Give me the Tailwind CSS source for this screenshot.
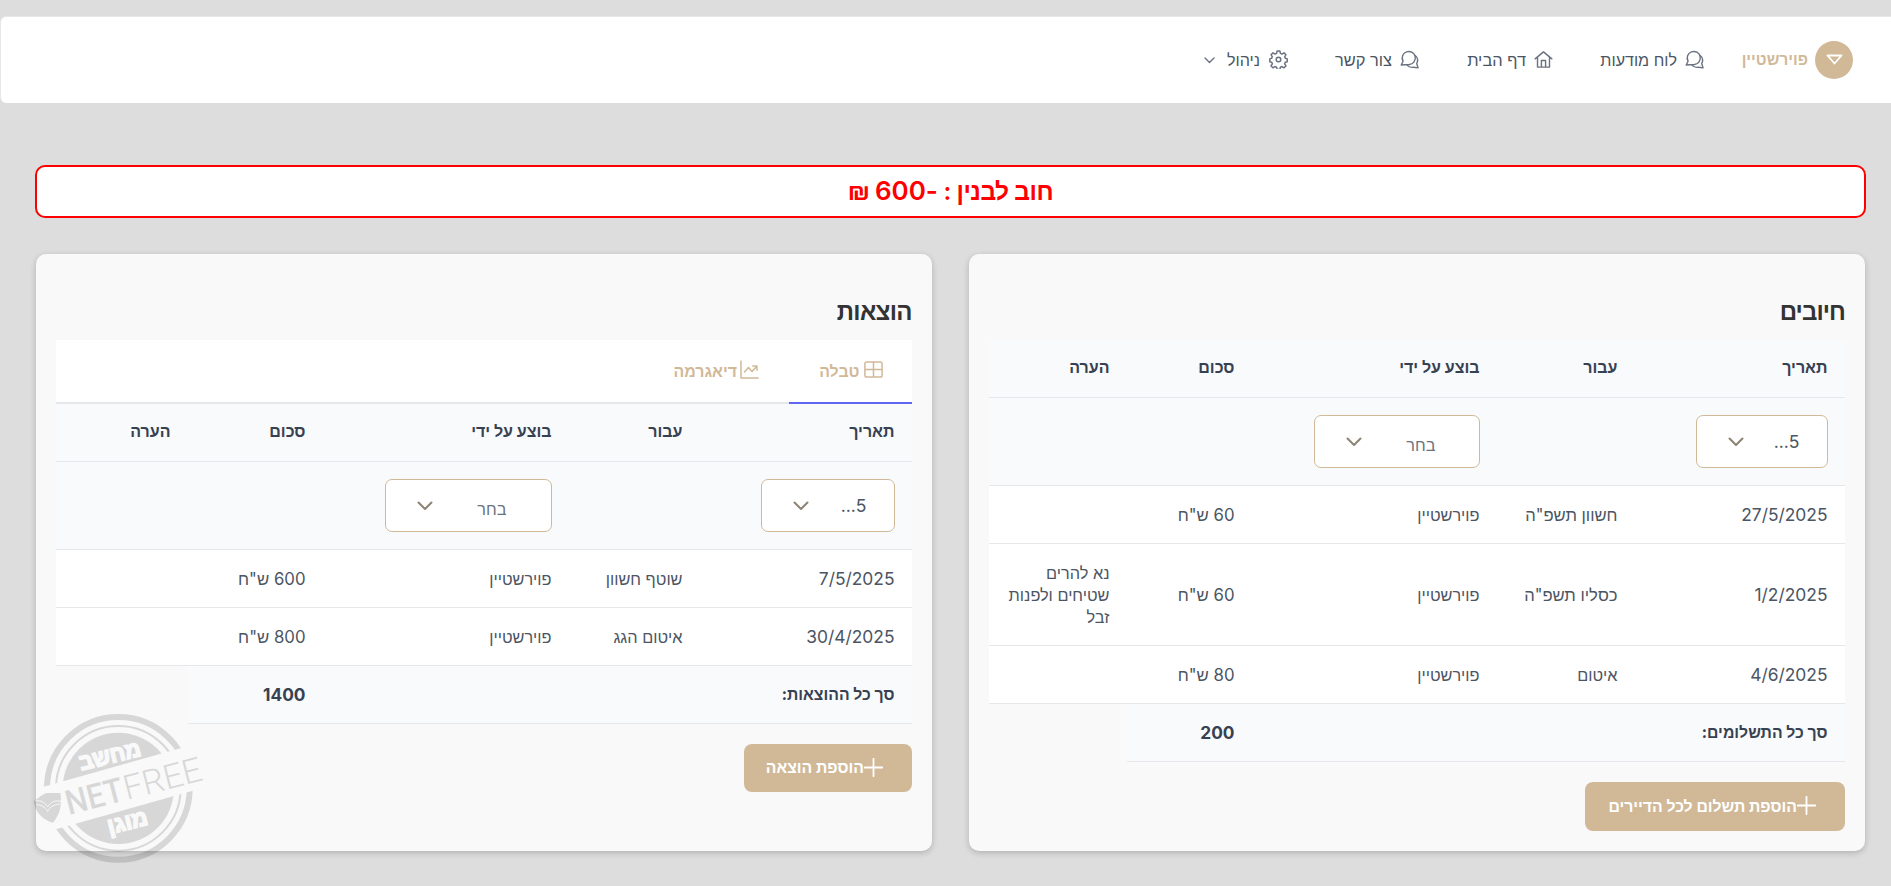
<!DOCTYPE html>
<html lang="he" dir="rtl">
<head>
<meta charset="utf-8">
<title>פוירשטיין</title>
<script src="https://cdn.jsdelivr.net/npm/@tailwindcss/browser@4"></script>
</head>
<body class="h-[886px] overflow-hidden bg-[#dddddd] font-[Inter,'Noto_Sans',sans-serif] text-[16.3px] leading-[22px] text-[#4b5563]">
<svg class="hidden">
  <symbol id="chat" viewBox="0 0 20 20" fill="none" stroke="currentColor" stroke-width="1.5" stroke-linejoin="round"><path d="M3.200 11.800A6.900 6.900 0 1 1 9.800 15.300L1.300 15.800z"/><path d="M15.800 5.500a7 7 0 0 1 1.800 8.700l1.400 4.600-4.800-.7a7 7 0 0 1-7-2.500"/></symbol>
  <symbol id="home" viewBox="0 0 20 20" fill="none" stroke="currentColor" stroke-width="1.5" stroke-linejoin="round" stroke-linecap="round"><path d="M1.200 9.300L10 2l8.800 7.300M3.700 7.500V18h12.600V7.500M7.800 18v-7h4.400v7"/></symbol>
  <symbol id="gear" viewBox="0 0 24 24" fill="none" stroke="currentColor" stroke-width="1.900" stroke-linejoin="round"><circle cx="12" cy="12" r="2.900"/><path d="M10.300 1.300h3.400l.7 3 2 .8 2.600-1.600 2.400 2.400-1.600 2.700.8 1.900 2.400.7v3.600l-2.400.6-.8 2 1.600 2.700-2.400 2.400-2.600-1.600-2 .8-.7 3h-3.400l-.7-3-2-.8L5 22.500l-2.400-2.400 1.600-2.700-.8-2-2.400-.6v-3.600l2.400-.7.8-1.900-1.600-2.700L5 3.500l2.600 1.600 2-.8z"/></symbol>
  <symbol id="chev" viewBox="0 0 16 10" fill="none" stroke="currentColor" stroke-width="2" stroke-linecap="round" stroke-linejoin="round"><path d="M1.500 1.500L8 8l6.500-6.500"/></symbol>
  <symbol id="plus" viewBox="0 0 18 18" fill="none" stroke="currentColor" stroke-width="1.700" stroke-linecap="round"><path d="M9 .8v16.400M.8 9h16.400"/></symbol>
</svg>

<header class="mt-4 flex h-[87px] items-center rounded-l-[6px] border-t border-l border-[#e5e7eb] bg-white pr-[38px]">
  <div class="flex w-[111px] items-center gap-[7px] text-[15.700px] whitespace-nowrap font-semibold text-[#d1b998]">
    <span class="flex size-[38px] shrink-0 items-center justify-center rounded-full bg-[#d1b998]"><svg class="mb-[2px] h-[11px] w-[17px]" viewBox="0 0 17 11" fill="none" stroke="#fff" stroke-width="1.800" stroke-linejoin="round"><path d="M1.500 1.500h14L8.500 9.500z"/></svg></span>
    <span>פוירשטיין</span>
  </div>
  <nav class="mr-[38px] flex items-center text-[16.100px] whitespace-nowrap">
    <a class="flex w-[151px] items-center gap-[8px]"><svg class="mb-0.5 size-[19px] text-[#6b7280]"><use href="#chat"/></svg><span>לוח מודעות</span></a>
    <a class="flex w-[134px] items-center gap-[8px] text-[16.400px]"><svg class="mb-0.5 size-[19px] text-[#6b7280]"><use href="#home"/></svg><span>דף הבית</span></a>
    <a class="flex w-[131px] items-center gap-[8px] text-[16.400px]"><svg class="mb-0.5 size-[19px] text-[#6b7280]"><use href="#chat"/></svg><span>צור קשר</span></a>
    <a class="flex items-center gap-[9px]"><svg class="mb-0.5 size-[19px] text-[#6b7280]"><use href="#gear"/></svg><span>ניהול</span><svg class="mr-[3px] h-[7px] w-[11px] text-[#6b7280]"><use href="#chev"/></svg></a>
  </nav>
</header>

<main class="mt-[62px] mr-[25px] ml-[35px]">
  <div class="flex h-[53px] items-center justify-center rounded-[10px] border-2 border-[#ff0000] bg-white pb-[2px] text-[24.5px] leading-[30px] font-semibold text-[#ff0000]"><span class="-tracking-[0.500px]">חוב לבנין : <span class="text-[26px] tracking-normal">-600</span> ₪</span></div>

  <div class="mt-[36px] mr-px flex gap-[37px]">
    <section class="h-[597px] w-[896px] shrink-0 rounded-[10px] bg-[#f9f9f9] px-5 pt-[43px] shadow-[0_2px_6px_rgba(0,0,0,0.2)]">
      <h2 class="h-[43px] text-[24px] leading-[30px] font-semibold -tracking-[0.9px] text-[#333333]">חיובים</h2>
      <table class="w-[856px] table-fixed border-separate border-spacing-0 [&_td]:border-b [&_td]:border-[#e5e7eb] [&_td]:px-[17.5px] [&_th]:border-b [&_th]:border-[#e5e7eb] [&_th]:px-[17.5px] [&_th]:text-right [&_th]:text-[16px]">
        <colgroup><col class="w-[210px]"><col class="w-[138px]"><col class="w-[245px]"><col class="w-[125px]"><col class="w-[138px]"></colgroup>
        <thead class="bg-[#f9fafc] text-[#374151]">
          <tr class="h-[58px] [&>th]:pb-[3px]"><th>תאריך</th><th>עבור</th><th>בוצע על ידי</th><th>סכום</th><th>הערה</th></tr>
          <tr class="h-[88px]">
            <th><div class="flex h-[53px] w-[132px] items-center justify-between rounded-[7px] border border-[#d1b998] bg-white pr-[27px] pl-[31px] text-[17.5px] font-normal text-[#4b5563]"><span>5...</span><svg class="h-[10px] w-[16px] text-[#8d8374]"><use href="#chev"/></svg></div></th>
            <th></th>
            <th><div class="flex h-[53px] w-[166px] items-center justify-between rounded-[7px] border border-[#d1b998] bg-white pr-[43px] pl-[31px] text-[16.3px] font-normal text-[#6b7280]"><span class="pt-1.5">בחר</span><svg class="h-[10px] w-[16px] text-[#8d8374]"><use href="#chev"/></svg></div></th>
            <th></th><th></th>
          </tr>
        </thead>
        <tbody class="bg-white">
          <tr class="h-[58px]"><td class="text-[17.4px]">27/5/2025</td><td class="text-[16.600px] whitespace-nowrap">חשוון תשפ"ה</td><td>פוירשטיין</td><td class="text-[16.8px]">60 ש"ח</td><td></td></tr>
          <tr class="h-[102px]"><td class="text-[17.4px]">1/2/2025</td><td class="text-[16.600px] whitespace-nowrap">כסליו תשפ"ה</td><td>פוירשטיין</td><td class="text-[16.8px]">60 ש"ח</td><td>נא להרים שטיחים ולפנות זבל</td></tr>
          <tr class="h-[58px]"><td class="text-[17.4px]">4/6/2025</td><td>איטום</td><td>פוירשטיין</td><td class="text-[16.8px]">80 ש"ח</td><td></td></tr>
          <tr class="h-[58px] text-[15.8px] font-bold text-[#374151]"><td colspan="3" class="bg-[#f9fafc]">סך כל התשלומים:</td><td class="bg-[#f9fafc] text-[17.3px]">200</td><th class="border-b-0! bg-[#f9f9f9]"></th></tr>
        </tbody>
      </table>
      <button class="mt-5 flex h-[49px] w-[260px] items-center rounded-[8px] bg-[#d1b998] pr-[29px] text-[15.8px] font-bold whitespace-nowrap text-white"><svg class="mb-0.5 size-[19px] shrink-0"><use href="#plus"/></svg><span>הוספת תשלום לכל הדיירים</span></button>
    </section>

    <section class="h-[597px] w-[896px] shrink-0 rounded-[10px] bg-[#f9f9f9] px-5 pt-[43px] shadow-[0_2px_6px_rgba(0,0,0,0.2)]">
      <h2 class="h-[43px] text-[24px] leading-[30px] font-semibold -tracking-[0.6px] text-[#333333]">הוצאות</h2>
      <div class="flex h-[64px] border-b-2 border-[#e5e7eb] bg-white text-[15.900px] font-bold text-[#d1b998]">
        <div class="flex h-[64px] w-[123px] items-center gap-1 border-b-2 border-[#6366f1] pr-[29.5px]"><svg class="mb-1 h-[17px] w-[19px]" viewBox="0 0 19 17" fill="none" stroke="currentColor" stroke-width="1.500"><rect x=".9" y=".9" width="17.200" height="15.200" rx="1.800"/><path d="M9.500 1v15M1 8.500h17"/></svg><span class="pt-[2px]">טבלה</span></div>
        <div class="flex h-[64px] items-center gap-[3px] border-b-2 border-transparent pr-[30px]"><svg class="mb-1 h-[19px] w-[19px]" viewBox="0 0 19 19" fill="none" stroke="currentColor" stroke-width="1.500" stroke-linecap="round" stroke-linejoin="round"><path d="M1 1v17h17.200M4.500 12l4-4.500 3.500 4L17 6M12.800 6H17v4.200"/></svg><span class="pt-[2px]">דיאגרמה</span></div>
      </div>
      <table class="w-[856px] table-fixed border-separate border-spacing-0 [&_td]:border-b [&_td]:border-[#e5e7eb] [&_td]:px-[17.5px] [&_th]:border-b [&_th]:border-[#e5e7eb] [&_th]:px-[17.5px] [&_th]:text-right [&_th]:text-[16px]">
        <colgroup><col class="w-[212px]"><col class="w-[131px]"><col class="w-[246px]"><col class="w-[135px]"><col class="w-[132px]"></colgroup>
        <thead class="bg-[#f9fafc] text-[#374151]">
          <tr class="h-[58px] [&>th]:pb-[3px]"><th>תאריך</th><th>עבור</th><th>בוצע על ידי</th><th>סכום</th><th>הערה</th></tr>
          <tr class="h-[88px]">
            <th><div class="flex h-[53px] w-[134px] items-center justify-between rounded-[7px] border border-[#d1b998] bg-white pr-[27px] pl-[31px] text-[17.5px] font-normal text-[#4b5563]"><span>5...</span><svg class="h-[10px] w-[16px] text-[#8d8374]"><use href="#chev"/></svg></div></th>
            <th></th>
            <th><div class="flex h-[53px] w-[167px] items-center justify-between rounded-[7px] border border-[#d1b998] bg-white pr-[44px] pl-[31px] text-[16.3px] font-normal text-[#6b7280]"><span class="pt-1.5">בחר</span><svg class="h-[10px] w-[16px] text-[#8d8374]"><use href="#chev"/></svg></div></th>
            <th></th><th></th>
          </tr>
        </thead>
        <tbody class="bg-white">
          <tr class="h-[58px]"><td class="text-[17.4px]">7/5/2025</td><td class="whitespace-nowrap">שוטף חשוון</td><td>פוירשטיין</td><td class="text-[16.8px]">600 ש"ח</td><td></td></tr>
          <tr class="h-[58px]"><td class="text-[17.4px]">30/4/2025</td><td>איטום הגג</td><td>פוירשטיין</td><td class="text-[16.8px]">800 ש"ח</td><td></td></tr>
          <tr class="h-[58px] text-[15.8px] font-bold text-[#374151]"><td colspan="3" class="bg-[#f9fafc]">סך כל ההוצאות:</td><td class="bg-[#f9fafc] text-[17.3px]">1400</td><th class="border-b-0! bg-[#f9f9f9]"></th></tr>
        </tbody>
      </table>
      <button class="mt-5 flex h-[48px] w-[168px] items-center rounded-[8px] bg-[#d1b998] pr-[29px] text-[15.8px] font-bold whitespace-nowrap text-white"><svg class="mb-0.5 size-[19px] shrink-0"><use href="#plus"/></svg><span>הוספת הוצאה</span></button>
    </section>
  </div>
</main>

<!-- NetFree protection stamp -->
<svg class="absolute top-[690px] left-0 h-[196px] w-[230px]" viewBox="0 0 690 588" direction="ltr">
  <clipPath id="halves"><path d="M90 302L600 158V0H90zM90 440L640 285V588H90z"/></clipPath>
  <g opacity=".13">
    <g clip-path="url(#halves)">
      <circle cx="355" cy="295" r="214" fill="none" stroke="#000" stroke-width="18"/>
      <circle cx="355" cy="295" r="187" fill="none" stroke="#000" stroke-width="6"/>
      <circle cx="355" cy="295" r="167"/>
    </g>
    <path d="M101 333c14-7 28-24 42-24h38c5 28 2 62-22 89-26-6-48-26-54-50z"/>
    <g transform="translate(206 375) rotate(-14.500)" font-family="Roboto, sans-serif" font-size="102">
      <text x="0" y="0" font-weight="500" textLength="176" lengthAdjust="spacingAndGlyphs">NET</text>
      <text x="180" y="0" font-weight="300" textLength="240" lengthAdjust="spacingAndGlyphs">FREE</text>
    </g>
  </g>
  <path d="M106 333c16-3 28 3 37 18 9-15 22-21 40-17M108 344c15 0 27 6 35 20 8-14 20-21 38-22" fill="none" stroke="#f9f9f9" stroke-width="3"/>
  <g fill="#f9f9f9" stroke="#f9f9f9" stroke-width="5" font-family="'Noto Sans', sans-serif" font-weight="900" font-size="68" text-anchor="middle">
    <text transform="translate(335 219) rotate(-14)" textLength="188" lengthAdjust="spacingAndGlyphs">מחשב</text>
    <text transform="translate(388 418) rotate(-14)" textLength="122" lengthAdjust="spacingAndGlyphs">מוגן</text>
  </g>
</svg>
</body>
</html>
